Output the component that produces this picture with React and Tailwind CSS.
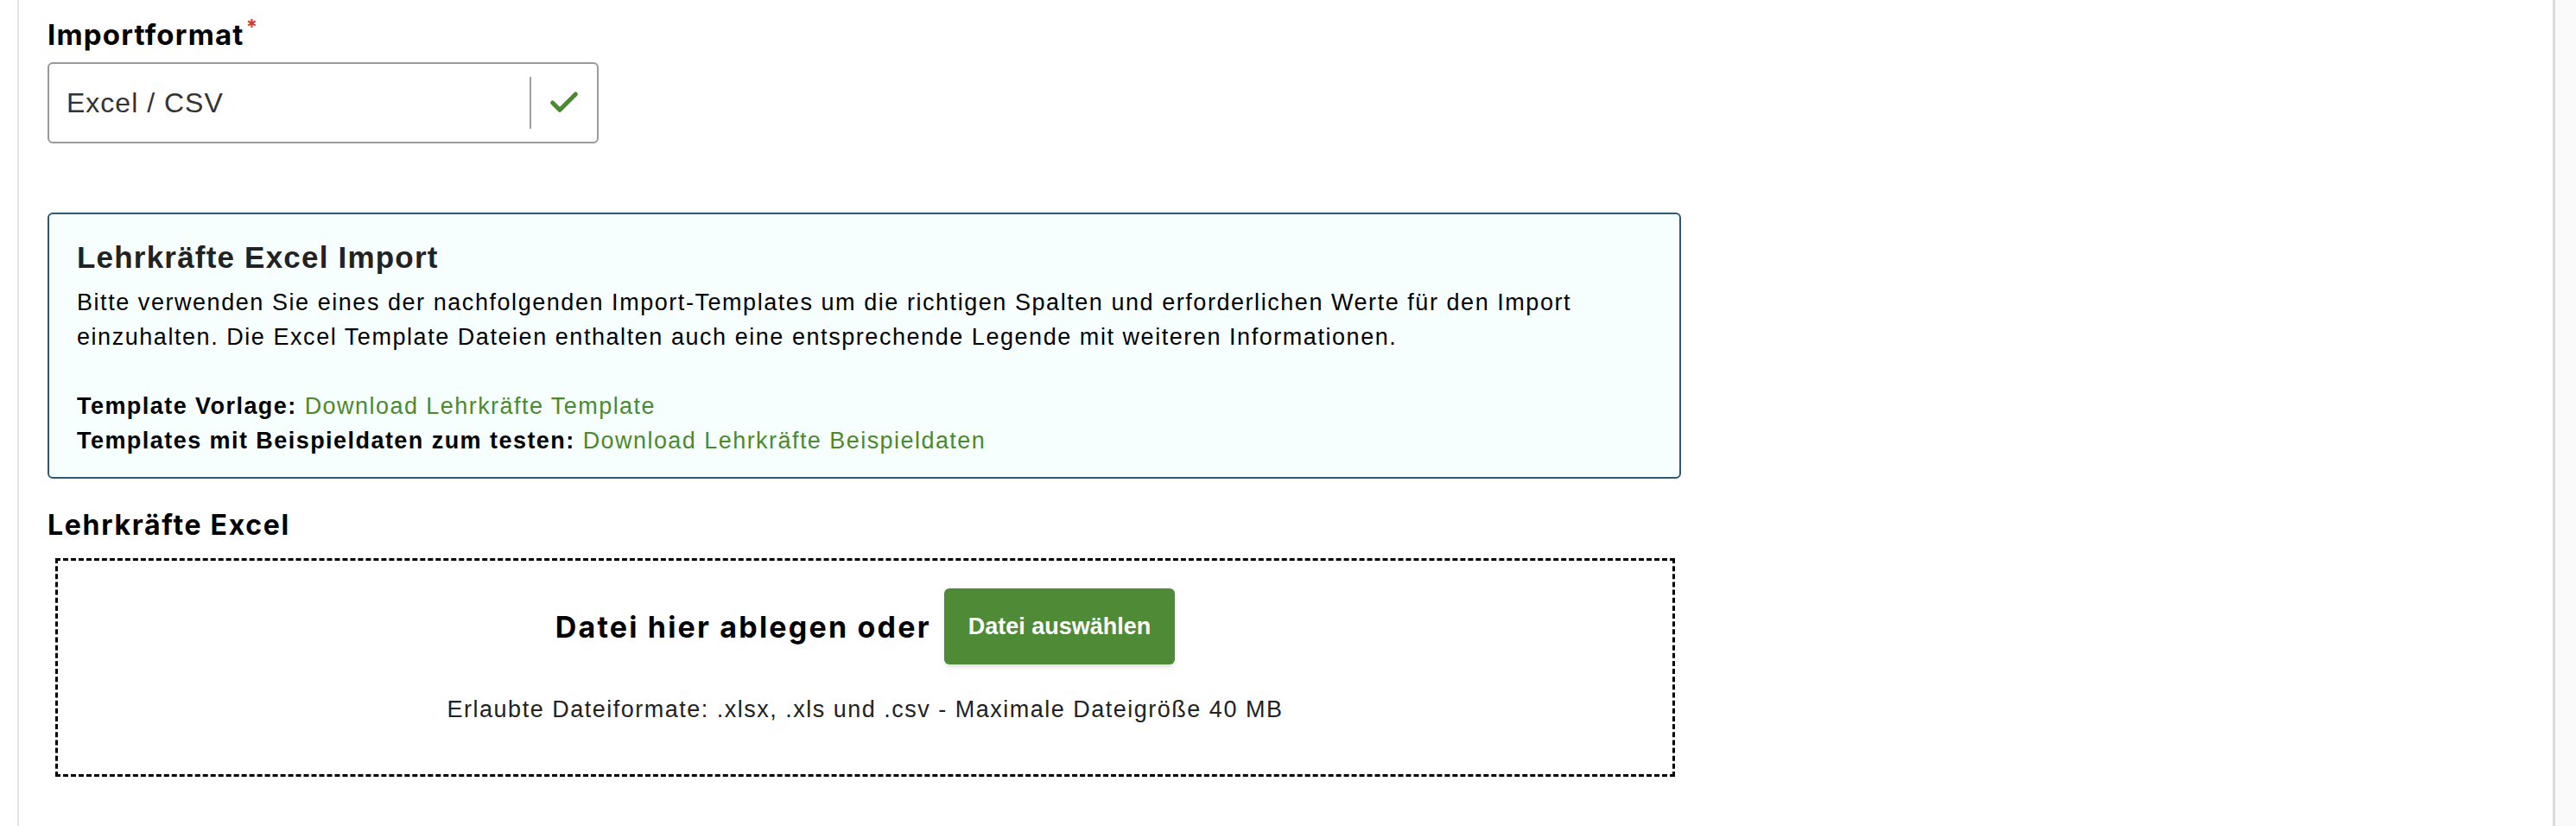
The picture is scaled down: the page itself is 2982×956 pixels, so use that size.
import { Check } from 'lucide-react';

const labelFont = "font-['Inter','Lato',sans-serif]";
const bodyFont = "font-['Liberation_Sans','Arial',sans-serif]";

function FieldLabel({ children, required, className = '' }) {
  return (
    <div className={`${labelFont} font-bold text-black ${className}`}>
      {children}
      {required && <span className="relative -top-[12px] ml-[2px] text-[24px] tracking-normal text-[#d33a2c]">*</span>}
    </div>
  );
}

function FormatSelect() {
  return (
    <div className="mt-[8px] flex h-[94px] w-[638px] items-center rounded-[6px] border-2 border-[#9a9a9a] bg-white">
      <span className={`${bodyFont} flex-1 pl-[20px] text-[32px] tracking-[1px] text-[#333]`}>Excel / CSV</span>
      <span className="h-[60px] w-[2px] bg-[#9f9f9f]" />
      <span className="flex w-[76px] items-center justify-center">
        <Check className="h-[40px] w-[40px] text-[#4a8a2f]" strokeWidth={3} />
      </span>
    </div>
  );
}

function TemplateInfo() {
  return (
    <div className={`${bodyFont} mt-[80px] w-[1891px] rounded-[6px] border-2 border-[#2c5a72] bg-[#f7fefe] px-[32px] pb-[22px] pt-[26px] text-black`}>
      <h2 className="text-[35px] font-bold leading-[48px] tracking-[1.2px] text-[#222]">Lehrkräfte Excel Import</h2>
      <p className="mt-[8px] text-[27px] leading-[40px] tracking-[1.55px]">
        Bitte verwenden Sie eines der nachfolgenden Import-Templates um die richtigen Spalten und erforderlichen Werte für den Import
        einzuhalten. Die Excel Template Dateien enthalten auch eine entsprechende Legende mit weiteren Informationen.
      </p>
      <div className="mt-[40px] text-[27px] leading-[40px] tracking-[1.45px]">
        <div>
          <span className="font-bold">Template Vorlage:</span>{' '}
          <a className="text-[#4a8a2f]">Download Lehrkräfte Template</a>
        </div>
        <div>
          <span className="font-bold">Templates mit Beispieldaten zum testen:</span>{' '}
          <a className="text-[#4a8a2f]">Download Lehrkräfte Beispieldaten</a>
        </div>
      </div>
    </div>
  );
}

function DropZone() {
  return (
    <div className="ml-[9px] mt-[18px] flex h-[253px] w-[1875px] flex-col items-center border-[3px] border-dashed border-black pt-[32px]">
      <div className="flex items-center gap-[15px]">
        <span className={`${labelFont} text-[34px] font-bold tracking-[2.2px] text-black`}>Datei hier ablegen oder</span>
        <button
          type="button"
          className={`${bodyFont} h-[88px] rounded-[6px] bg-[#4f8a37] px-[28px] text-[27px] font-bold text-white shadow-md`}
        >
          Datei auswählen
        </button>
      </div>
      <p className={`${bodyFont} mt-[32px] text-[27px] tracking-[1.5px] text-[#222]`}>
        Erlaubte Dateiformate: .xlsx, .xls und .csv - Maximale Dateigröße 40 MB
      </p>
    </div>
  );
}

export default function App() {
  return (
    <div className="flex h-[956px] w-full bg-white">
      <div className="ml-[20px] w-[2938px] border-x-[3px] border-l-[2px] border-l-[#e3e3e3] border-r-[#dcdcdc] pl-[33px] pt-[20px]">
        <FieldLabel required className="text-[33px] leading-[40px] tracking-[1.2px]">Importformat</FieldLabel>
        <FormatSelect />
        <TemplateInfo />
        <FieldLabel className="mt-[34px] text-[32px] leading-[40px] tracking-[1.7px]">Lehrkräfte Excel</FieldLabel>
        <DropZone />
      </div>
      <div className="flex-1 bg-[#fafafa]" />
    </div>
  );
}
